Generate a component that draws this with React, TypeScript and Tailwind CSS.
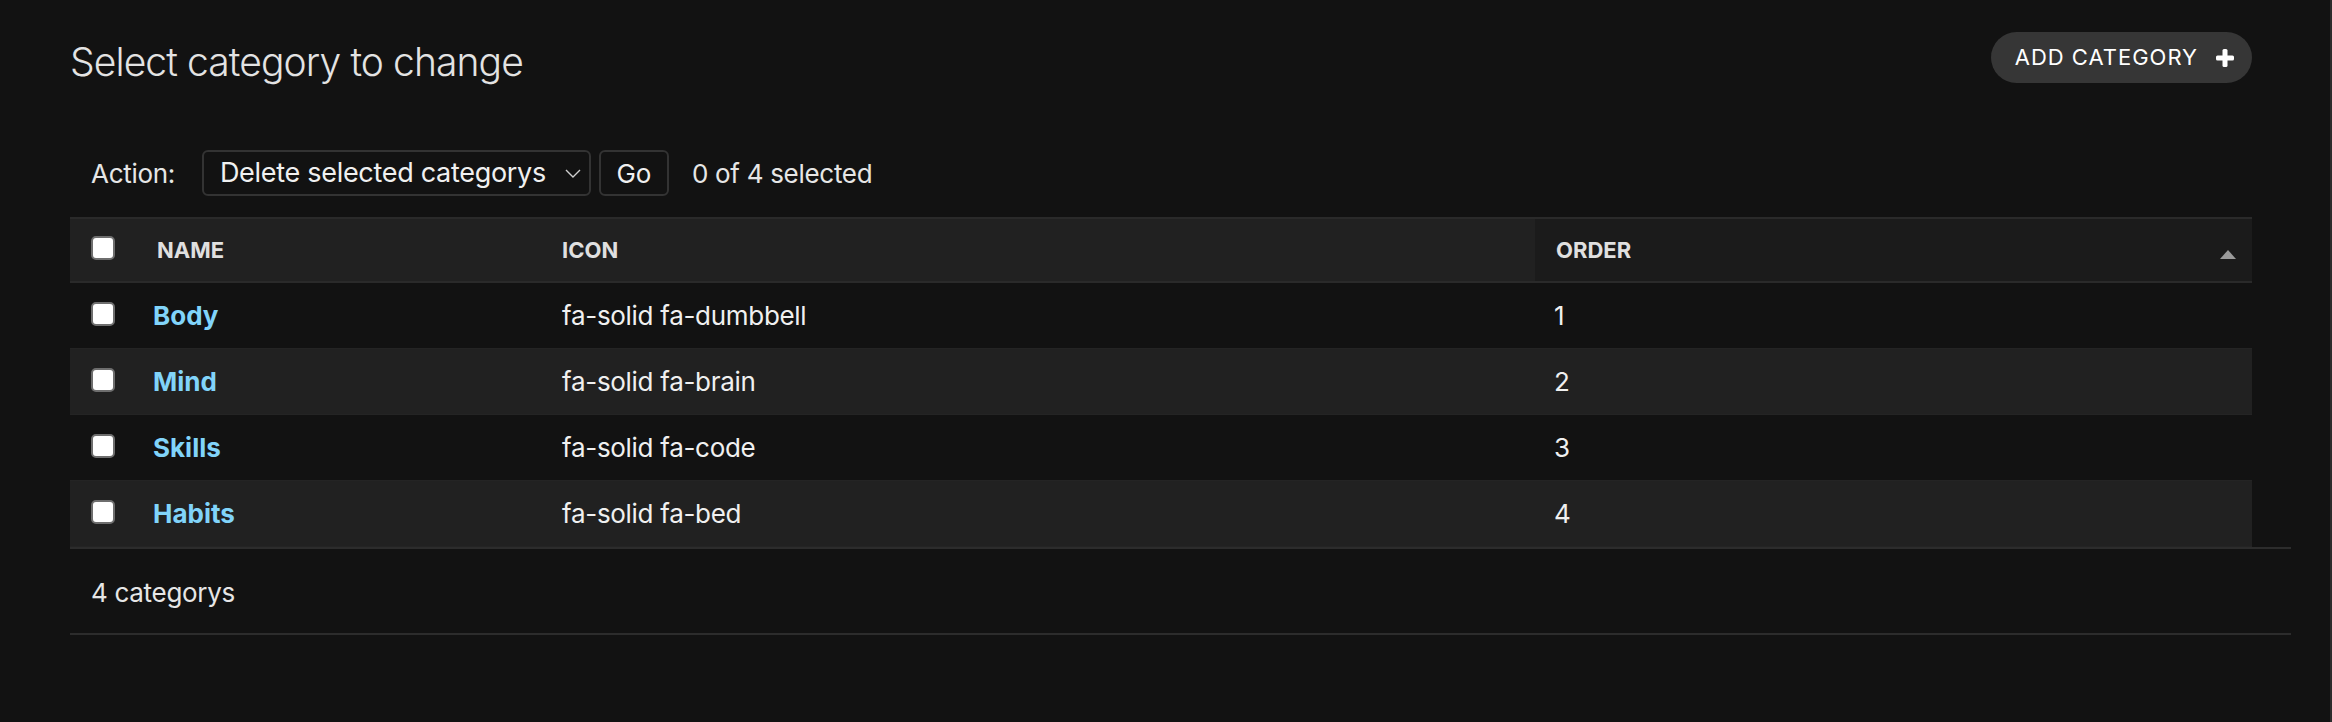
import React from 'react';

interface Category {
  name: string;
  icon: string;
  order: number;
}

const categories: Category[] = [
  { name: 'Body', icon: 'fa-solid fa-dumbbell', order: 1 },
  { name: 'Mind', icon: 'fa-solid fa-brain', order: 2 },
  { name: 'Skills', icon: 'fa-solid fa-code', order: 3 },
  { name: 'Habits', icon: 'fa-solid fa-bed', order: 4 },
];

function Checkbox() {
  return <div className="w-6 h-6 rounded-[5px] bg-white border-2 border-[#6e6e6e]" />;
}

function PlusIcon() {
  return (
    <svg width="20" height="20" viewBox="0 0 20 20" className="shrink-0">
      <rect x="7.5" y="1" width="5" height="18" rx="1.5" fill="#fff" />
      <rect x="1" y="7.5" width="18" height="5" rx="1.5" fill="#fff" />
    </svg>
  );
}

export default function App() {
  return (
    <div
      className="min-h-screen bg-[#121212] text-[#eeeeee] border-r-2 border-[#2c2c2c]"
      style={{ fontFamily: 'Inter, "Noto Sans", sans-serif' }}
    >
      <div className="pl-[70px] pr-[39px] pt-[32px]">
        {/* Title + object tools */}
        <div className="flex justify-between items-start mr-[39px]">
          <h1 className="mt-[6px] text-[39px] leading-[48px] font-light text-[#e3e3e3] tracking-[-0.9px]">
            Select category to change
          </h1>
          <button className="h-[51px] pl-[24px] pr-[17px] rounded-full bg-[#363636] flex items-center gap-[17px] text-white text-[22px] tracking-[1px] uppercase">
            Add category
            <PlusIcon />
          </button>
        </div>

        {/* Actions */}
        <div className="flex items-center mt-[64px] h-[46px] text-[26px]">
          <span className="ml-[21px] mr-[27px] text-[#e6e6e6] tracking-[-0.3px]">Action:</span>
          <div className="h-[46px] w-[389px] pl-[16px] pr-[8px] border-2 border-[#333] rounded-[6px] flex items-center justify-between">
            <span className="text-[27px] text-[#f0f0f0] tracking-[-0.3px]">Delete selected categorys</span>
            <svg width="16" height="9" viewBox="0 0 16 9">
              <path d="M1 1 L8 8 L15 1" stroke="#cfcfcf" strokeWidth="1.4" fill="none" />
            </svg>
          </div>
          <div className="ml-[8px] h-[46px] w-[70px] border-2 border-[#333] rounded-[6px] flex items-center justify-center text-[#f0f0f0]">
            Go
          </div>
          <span className="ml-[23px] text-[#e6e6e6] tracking-[-0.3px]">0 of 4 selected</span>
        </div>

        {/* Results table */}
        <div className="mt-[21px] mr-[39px] text-[26px]">
          <div className="flex h-[66px] bg-[#212121] border-y-2 border-[#2a2a2a]">
            <div className="w-[66px] pl-[21px] flex items-center">
              <div className="-mt-[4px]">
                <Checkbox />
              </div>
            </div>
            <div className="w-[405px] pl-[21px] flex items-center text-[22px] font-bold text-[#e0e0e0] uppercase">
              Name
            </div>
            <div className="w-[994px] pl-[21px] flex items-center text-[22px] font-bold text-[#e0e0e0] uppercase">
              Icon
            </div>
            <div className="flex-1 pl-[21px] pr-[16px] flex items-center justify-between bg-[#1b1b1b] text-[22px] font-bold text-[#e0e0e0] uppercase">
              Order
              <svg width="16" height="9" viewBox="0 0 16 9" className="mt-[8px]">
                <path d="M8 0 L16 9 L0 9 Z" fill="#9a9a9a" />
              </svg>
            </div>
          </div>
          {categories.map((c, i) => (
            <div
              key={c.name}
              className={
                'flex h-[66px] border-b border-[#242424] ' + (i % 2 === 1 ? 'bg-[#212121]' : 'bg-[#121212]')
              }
            >
              <div className="w-[66px] pl-[21px] flex items-center">
                <div className="-mt-[4px]">
                  <Checkbox />
                </div>
              </div>
              <div className="w-[405px] pl-[17px] flex items-center font-bold text-[#81d4fa]">{c.name}</div>
              <div className="w-[994px] pl-[21px] flex items-center text-[#f0f0f0] tracking-[-0.3px]">{c.icon}</div>
              <div className="flex-1 pl-[19px] flex items-center text-[#f0f0f0]">{c.order}</div>
            </div>
          ))}
        </div>

        {/* Paginator */}
        <div className="h-[88px] border-y-2 border-[#2c2c2c] flex items-center pl-[21px] pt-[3px] text-[26px] text-[#e6e6e6] tracking-[-0.3px]">
          4 categorys
        </div>
      </div>
    </div>
  );
}
